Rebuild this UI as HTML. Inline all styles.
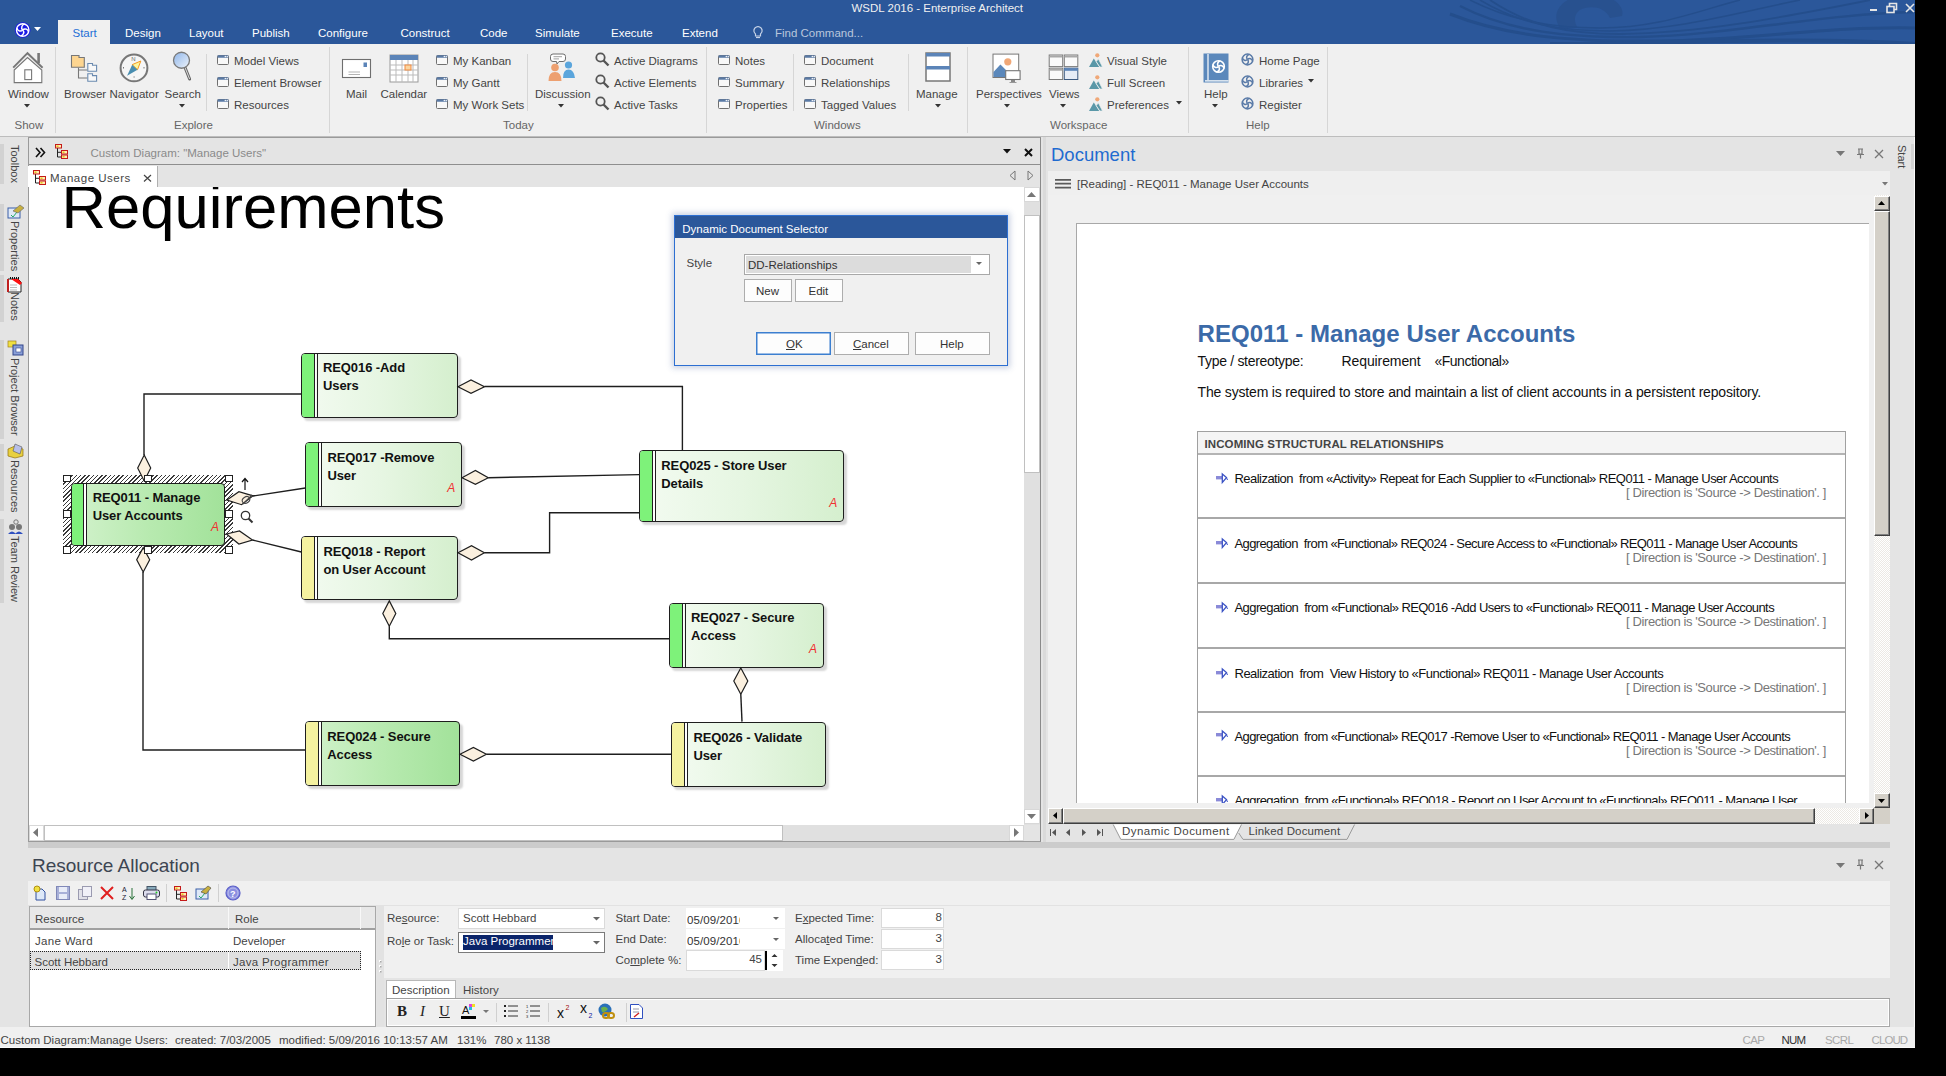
<!DOCTYPE html>
<html><head><meta charset="utf-8"><title>EA</title>
<style>
html,body{margin:0;padding:0;background:#000;width:1946px;height:1076px;overflow:hidden}
.app{position:absolute;left:0;top:0;width:1915px;height:1048px;background:#f0f0f0;overflow:hidden;font-family:"Liberation Sans",sans-serif}
.a{position:absolute;box-sizing:border-box}
.t{line-height:1;white-space:pre}
svg.a{overflow:visible}
</style></head><body><div class="app">
<div class="a " style="left:0px;top:0px;width:1915px;height:44px;background:#2b579a"></div>
<svg class="a" style="left:1400px;top:0px;" width="515" height="44" viewBox="0 0 515 44"><g fill="#28518f"><path d="M160,28 C150,14 160,-4 190,-6 C215,-6 225,8 222,16 L210,18 C205,8 195,6 185,8 C175,10 172,20 178,28 Z"/></g><g fill="none" stroke="#244e8c"><path d="M70,0 C110,20 150,28 200,28 C260,28 300,10 340,0" stroke-width="1.4"/><path d="M80,0 C120,24 160,31 210,31 C280,30 340,12 400,0" stroke-width="1.6"/><path d="M90,0 C130,27 170,34 220,34 C300,33 380,18 470,0" stroke-width="1.8"/><path d="M60,6 C110,32 170,38 240,37 C330,35 420,14 515,12" stroke-width="2.4"/><path d="M50,14 C110,38 180,42 260,41 C350,40 430,26 515,28" stroke-width="3"/><path d="M150,44 C250,44 400,36 515,44" stroke-width="4"/></g></svg>
<div class="a " style="left:1870px;top:9px;width:7px;height:2px;background:#e6e6e6"></div>
<svg class="a" style="left:1886px;top:2px;" width="12" height="12" viewBox="0 0 12 12"><g fill="none" stroke="#e6e6e6" stroke-width="1.6"><rect x="1" y="4.5" width="7" height="6"/><path d="M3.5,4.5 V1.5 H10.5 V7.5 H8"/></g></svg>
<svg class="a" style="left:1905px;top:3px;" width="10" height="10" viewBox="0 0 10 10"><g stroke="#e6e6e6" stroke-width="1.6"><path d="M1,1 L9,9 M9,1 L1,9"/></g></svg>
<div class="a t" style="left:851.50px;top:2.97px;font-size:11.5px;color:#f0f0f0;font-weight:normal;">WSDL 2016 - Enterprise Architect</div>
<svg class="a" style="left:14px;top:21px;" width="18" height="18" viewBox="0 0 18 18"><circle cx="8.7" cy="9" r="7.8" fill="#1a1ae6"/><g fill="none" stroke="#fff" stroke-width="1.4"><circle cx="8.7" cy="9" r="6.2"/><path d="M8.7,9 A3.41,3.41 0 0 1 14.53,11.12"/><path d="M8.7,9 A3.41,3.41 0 0 1 6.58,14.83"/><path d="M8.7,9 A3.41,3.41 0 0 1 2.87,6.88"/><path d="M8.7,9 A3.41,3.41 0 0 1 10.82,3.17"/></g></svg>
<svg class="a" style="left:34px;top:27px;" width="8" height="5" viewBox="0 0 8 5"><path d="M0,0 H7 L3.5,4 Z" fill="#fff"/></svg>
<div class="a " style="left:58px;top:20px;width:52px;height:24px;background:#f0f0f0"></div>
<div class="a t" style="left:72.50px;top:27.97px;font-size:11.5px;color:#1f6fd6;font-weight:normal;">Start</div>
<div class="a t" style="left:125.00px;top:27.97px;font-size:11.5px;color:#ffffff;font-weight:normal;">Design</div>
<div class="a t" style="left:189.00px;top:27.97px;font-size:11.5px;color:#ffffff;font-weight:normal;">Layout</div>
<div class="a t" style="left:252.00px;top:27.97px;font-size:11.5px;color:#ffffff;font-weight:normal;">Publish</div>
<div class="a t" style="left:318.00px;top:27.97px;font-size:11.5px;color:#ffffff;font-weight:normal;">Configure</div>
<div class="a t" style="left:400.50px;top:27.97px;font-size:11.5px;color:#ffffff;font-weight:normal;">Construct</div>
<div class="a t" style="left:480.00px;top:27.97px;font-size:11.5px;color:#ffffff;font-weight:normal;">Code</div>
<div class="a t" style="left:535.00px;top:27.97px;font-size:11.5px;color:#ffffff;font-weight:normal;">Simulate</div>
<div class="a t" style="left:611.00px;top:27.97px;font-size:11.5px;color:#ffffff;font-weight:normal;">Execute</div>
<div class="a t" style="left:682.00px;top:27.97px;font-size:11.5px;color:#ffffff;font-weight:normal;">Extend</div>
<svg class="a" style="left:752px;top:25px;" width="12" height="14" viewBox="0 0 12 14"><g fill="none" stroke="#c8d4e8" stroke-width="1.2"><path d="M3.5,9 C1,7 1,2.5 6,1.5 C11,2.5 11,7 8.5,9 V11 H3.5 Z"/><path d="M4,12.5 H8"/></g></svg>
<div class="a t" style="left:775.00px;top:27.97px;font-size:11.5px;color:#b9c6dc;font-weight:normal;">Find Command...</div>
<div class="a " style="left:0px;top:44px;width:1915px;height:92px;background:#f0f0f0"></div>
<div class="a " style="left:0px;top:136px;width:1915px;height:1px;background:#bdbdbd"></div>
<div class="a " style="left:55px;top:47px;width:1px;height:86px;background:#d6d6d6"></div>
<div class="a " style="left:329px;top:47px;width:1px;height:86px;background:#d6d6d6"></div>
<div class="a " style="left:706px;top:47px;width:1px;height:86px;background:#d6d6d6"></div>
<div class="a " style="left:967px;top:47px;width:1px;height:86px;background:#d6d6d6"></div>
<div class="a " style="left:1188px;top:47px;width:1px;height:86px;background:#d6d6d6"></div>
<div class="a " style="left:1327px;top:47px;width:1px;height:86px;background:#d6d6d6"></div>
<div class="a " style="left:206px;top:54px;width:1px;height:57px;background:#d6d6d6"></div>
<div class="a " style="left:527px;top:54px;width:1px;height:57px;background:#d6d6d6"></div>
<div class="a " style="left:793px;top:54px;width:1px;height:57px;background:#d6d6d6"></div>
<div class="a " style="left:908px;top:54px;width:1px;height:57px;background:#d6d6d6"></div>
<div class="a t" style="left:14.50px;top:119.97px;font-size:11.5px;color:#666;font-weight:normal;">Show</div>
<div class="a t" style="left:174.00px;top:119.97px;font-size:11.5px;color:#666;font-weight:normal;">Explore</div>
<div class="a t" style="left:503.00px;top:119.97px;font-size:11.5px;color:#666;font-weight:normal;">Today</div>
<div class="a t" style="left:814.00px;top:119.97px;font-size:11.5px;color:#666;font-weight:normal;">Windows</div>
<div class="a t" style="left:1050.00px;top:119.97px;font-size:11.5px;color:#666;font-weight:normal;">Workspace</div>
<div class="a t" style="left:1246.00px;top:119.97px;font-size:11.5px;color:#666;font-weight:normal;">Help</div>
<div class="a t" style="left:8.00px;top:88.77px;font-size:11.5px;color:#444;font-weight:normal;">Window</div>
<div class="a t" style="left:64.00px;top:88.77px;font-size:11.5px;color:#444;font-weight:normal;">Browser</div>
<div class="a t" style="left:109.50px;top:88.77px;font-size:11.5px;color:#444;font-weight:normal;">Navigator</div>
<div class="a t" style="left:164.50px;top:88.77px;font-size:11.5px;color:#444;font-weight:normal;">Search</div>
<div class="a t" style="left:346.00px;top:88.77px;font-size:11.5px;color:#444;font-weight:normal;">Mail</div>
<div class="a t" style="left:380.50px;top:88.77px;font-size:11.5px;color:#444;font-weight:normal;">Calendar</div>
<div class="a t" style="left:535.00px;top:88.77px;font-size:11.5px;color:#444;font-weight:normal;">Discussion</div>
<div class="a t" style="left:916.00px;top:88.77px;font-size:11.5px;color:#444;font-weight:normal;">Manage</div>
<div class="a t" style="left:976.00px;top:88.77px;font-size:11.5px;color:#444;font-weight:normal;">Perspectives</div>
<div class="a t" style="left:1049.00px;top:88.77px;font-size:11.5px;color:#444;font-weight:normal;">Views</div>
<div class="a t" style="left:1204.00px;top:88.77px;font-size:11.5px;color:#444;font-weight:normal;">Help</div>
<svg class="a" style="left:24px;top:104px;" width="7" height="4" viewBox="0 0 7 4"><path d="M0,0 H6 L3,3.5 Z" fill="#333"/></svg>
<svg class="a" style="left:179px;top:104px;" width="7" height="4" viewBox="0 0 7 4"><path d="M0,0 H6 L3,3.5 Z" fill="#333"/></svg>
<svg class="a" style="left:558px;top:104px;" width="7" height="4" viewBox="0 0 7 4"><path d="M0,0 H6 L3,3.5 Z" fill="#333"/></svg>
<svg class="a" style="left:935px;top:104px;" width="7" height="4" viewBox="0 0 7 4"><path d="M0,0 H6 L3,3.5 Z" fill="#333"/></svg>
<svg class="a" style="left:1004px;top:104px;" width="7" height="4" viewBox="0 0 7 4"><path d="M0,0 H6 L3,3.5 Z" fill="#333"/></svg>
<svg class="a" style="left:1060px;top:104px;" width="7" height="4" viewBox="0 0 7 4"><path d="M0,0 H6 L3,3.5 Z" fill="#333"/></svg>
<svg class="a" style="left:1212px;top:104px;" width="7" height="4" viewBox="0 0 7 4"><path d="M0,0 H6 L3,3.5 Z" fill="#333"/></svg>
<svg class="a" style="left:217px;top:55px;" width="12" height="10" viewBox="0 0 12 10"><rect x="0.5" y="0.5" width="11" height="9" rx="1" fill="#f8f8f8" stroke="#707070"/><rect x="0.5" y="0.3" width="11" height="2.4" rx="0.8" fill="#5a7aa5"/><circle cx="8.3" cy="1.5" r="0.7" fill="#fff"/><circle cx="10.2" cy="1.5" r="0.7" fill="#fff"/></svg>
<div class="a t" style="left:234.00px;top:55.67px;font-size:11.5px;color:#444;font-weight:normal;">Model Views</div>
<svg class="a" style="left:217px;top:77px;" width="12" height="10" viewBox="0 0 12 10"><rect x="0.5" y="0.5" width="11" height="9" rx="1" fill="#f8f8f8" stroke="#707070"/><rect x="0.5" y="0.3" width="11" height="2.4" rx="0.8" fill="#5a7aa5"/><circle cx="8.3" cy="1.5" r="0.7" fill="#fff"/><circle cx="10.2" cy="1.5" r="0.7" fill="#fff"/></svg>
<div class="a t" style="left:234.00px;top:77.67px;font-size:11.5px;color:#444;font-weight:normal;">Element Browser</div>
<svg class="a" style="left:217px;top:99px;" width="12" height="10" viewBox="0 0 12 10"><rect x="0.5" y="0.5" width="11" height="9" rx="1" fill="#f8f8f8" stroke="#707070"/><rect x="0.5" y="0.3" width="11" height="2.4" rx="0.8" fill="#5a7aa5"/><circle cx="8.3" cy="1.5" r="0.7" fill="#fff"/><circle cx="10.2" cy="1.5" r="0.7" fill="#fff"/></svg>
<div class="a t" style="left:234.00px;top:99.67px;font-size:11.5px;color:#444;font-weight:normal;">Resources</div>
<svg class="a" style="left:436px;top:55px;" width="12" height="10" viewBox="0 0 12 10"><rect x="0.5" y="0.5" width="11" height="9" rx="1" fill="#f8f8f8" stroke="#707070"/><rect x="0.5" y="0.3" width="11" height="2.4" rx="0.8" fill="#5a7aa5"/><circle cx="8.3" cy="1.5" r="0.7" fill="#fff"/><circle cx="10.2" cy="1.5" r="0.7" fill="#fff"/></svg>
<div class="a t" style="left:453.00px;top:55.67px;font-size:11.5px;color:#444;font-weight:normal;">My Kanban</div>
<svg class="a" style="left:436px;top:77px;" width="12" height="10" viewBox="0 0 12 10"><rect x="0.5" y="0.5" width="11" height="9" rx="1" fill="#f8f8f8" stroke="#707070"/><rect x="0.5" y="0.3" width="11" height="2.4" rx="0.8" fill="#5a7aa5"/><circle cx="8.3" cy="1.5" r="0.7" fill="#fff"/><circle cx="10.2" cy="1.5" r="0.7" fill="#fff"/></svg>
<div class="a t" style="left:453.00px;top:77.67px;font-size:11.5px;color:#444;font-weight:normal;">My Gantt</div>
<svg class="a" style="left:436px;top:99px;" width="12" height="10" viewBox="0 0 12 10"><rect x="0.5" y="0.5" width="11" height="9" rx="1" fill="#f8f8f8" stroke="#707070"/><rect x="0.5" y="0.3" width="11" height="2.4" rx="0.8" fill="#5a7aa5"/><circle cx="8.3" cy="1.5" r="0.7" fill="#fff"/><circle cx="10.2" cy="1.5" r="0.7" fill="#fff"/></svg>
<div class="a t" style="left:453.00px;top:99.67px;font-size:11.5px;color:#444;font-weight:normal;">My Work Sets</div>
<svg class="a" style="left:718px;top:55px;" width="12" height="10" viewBox="0 0 12 10"><rect x="0.5" y="0.5" width="11" height="9" rx="1" fill="#f8f8f8" stroke="#707070"/><rect x="0.5" y="0.3" width="11" height="2.4" rx="0.8" fill="#5a7aa5"/><circle cx="8.3" cy="1.5" r="0.7" fill="#fff"/><circle cx="10.2" cy="1.5" r="0.7" fill="#fff"/></svg>
<div class="a t" style="left:735.00px;top:55.67px;font-size:11.5px;color:#444;font-weight:normal;">Notes</div>
<svg class="a" style="left:718px;top:77px;" width="12" height="10" viewBox="0 0 12 10"><rect x="0.5" y="0.5" width="11" height="9" rx="1" fill="#f8f8f8" stroke="#707070"/><rect x="0.5" y="0.3" width="11" height="2.4" rx="0.8" fill="#5a7aa5"/><circle cx="8.3" cy="1.5" r="0.7" fill="#fff"/><circle cx="10.2" cy="1.5" r="0.7" fill="#fff"/></svg>
<div class="a t" style="left:735.00px;top:77.67px;font-size:11.5px;color:#444;font-weight:normal;">Summary</div>
<svg class="a" style="left:718px;top:99px;" width="12" height="10" viewBox="0 0 12 10"><rect x="0.5" y="0.5" width="11" height="9" rx="1" fill="#f8f8f8" stroke="#707070"/><rect x="0.5" y="0.3" width="11" height="2.4" rx="0.8" fill="#5a7aa5"/><circle cx="8.3" cy="1.5" r="0.7" fill="#fff"/><circle cx="10.2" cy="1.5" r="0.7" fill="#fff"/></svg>
<div class="a t" style="left:735.00px;top:99.67px;font-size:11.5px;color:#444;font-weight:normal;">Properties</div>
<svg class="a" style="left:804px;top:55px;" width="12" height="10" viewBox="0 0 12 10"><rect x="0.5" y="0.5" width="11" height="9" rx="1" fill="#f8f8f8" stroke="#707070"/><rect x="0.5" y="0.3" width="11" height="2.4" rx="0.8" fill="#5a7aa5"/><circle cx="8.3" cy="1.5" r="0.7" fill="#fff"/><circle cx="10.2" cy="1.5" r="0.7" fill="#fff"/></svg>
<div class="a t" style="left:821.00px;top:55.67px;font-size:11.5px;color:#444;font-weight:normal;">Document</div>
<svg class="a" style="left:804px;top:77px;" width="12" height="10" viewBox="0 0 12 10"><rect x="0.5" y="0.5" width="11" height="9" rx="1" fill="#f8f8f8" stroke="#707070"/><rect x="0.5" y="0.3" width="11" height="2.4" rx="0.8" fill="#5a7aa5"/><circle cx="8.3" cy="1.5" r="0.7" fill="#fff"/><circle cx="10.2" cy="1.5" r="0.7" fill="#fff"/></svg>
<div class="a t" style="left:821.00px;top:77.67px;font-size:11.5px;color:#444;font-weight:normal;">Relationships</div>
<svg class="a" style="left:804px;top:99px;" width="12" height="10" viewBox="0 0 12 10"><rect x="0.5" y="0.5" width="11" height="9" rx="1" fill="#f8f8f8" stroke="#707070"/><rect x="0.5" y="0.3" width="11" height="2.4" rx="0.8" fill="#5a7aa5"/><circle cx="8.3" cy="1.5" r="0.7" fill="#fff"/><circle cx="10.2" cy="1.5" r="0.7" fill="#fff"/></svg>
<div class="a t" style="left:821.00px;top:99.67px;font-size:11.5px;color:#444;font-weight:normal;">Tagged Values</div>
<svg class="a" style="left:595px;top:52px;" width="15" height="15" viewBox="0 0 15 15"><g fill="none" stroke="#555" stroke-width="1.8"><circle cx="5.5" cy="5.5" r="4.2"/><path d="M8.5,8.5 L13.5,13.5" stroke-width="2.4"/></g></svg>
<div class="a t" style="left:614.00px;top:55.67px;font-size:11.5px;color:#444;font-weight:normal;">Active Diagrams</div>
<svg class="a" style="left:595px;top:74px;" width="15" height="15" viewBox="0 0 15 15"><g fill="none" stroke="#555" stroke-width="1.8"><circle cx="5.5" cy="5.5" r="4.2"/><path d="M8.5,8.5 L13.5,13.5" stroke-width="2.4"/></g></svg>
<div class="a t" style="left:614.00px;top:77.67px;font-size:11.5px;color:#444;font-weight:normal;">Active Elements</div>
<svg class="a" style="left:595px;top:96px;" width="15" height="15" viewBox="0 0 15 15"><g fill="none" stroke="#555" stroke-width="1.8"><circle cx="5.5" cy="5.5" r="4.2"/><path d="M8.5,8.5 L13.5,13.5" stroke-width="2.4"/></g></svg>
<div class="a t" style="left:614.00px;top:99.67px;font-size:11.5px;color:#444;font-weight:normal;">Active Tasks</div>
<svg class="a" style="left:1089px;top:53px;" width="14" height="14" viewBox="0 0 14 14"><circle cx="8.3" cy="2.3" r="2.1" fill="#f0a878"/><path d="M0,14 L4.8,5.5 L10.3,14 Z" fill="#5a98a8"/><path d="M7.2,8.6 L9.4,5.8 L13.6,14 H10.8 Z" fill="#5a98a8" stroke="#f0f0f0" stroke-width="0.8"/></svg>
<div class="a t" style="left:1107.00px;top:55.67px;font-size:11.5px;color:#444;font-weight:normal;">Visual Style</div>
<svg class="a" style="left:1089px;top:75px;" width="14" height="14" viewBox="0 0 14 14"><circle cx="8.3" cy="2.3" r="2.1" fill="#f0a878"/><path d="M0,14 L4.8,5.5 L10.3,14 Z" fill="#5a98a8"/><path d="M7.2,8.6 L9.4,5.8 L13.6,14 H10.8 Z" fill="#5a98a8" stroke="#f0f0f0" stroke-width="0.8"/></svg>
<div class="a t" style="left:1107.00px;top:77.67px;font-size:11.5px;color:#444;font-weight:normal;">Full Screen</div>
<svg class="a" style="left:1089px;top:97px;" width="14" height="14" viewBox="0 0 14 14"><circle cx="8.3" cy="2.3" r="2.1" fill="#f0a878"/><path d="M0,14 L4.8,5.5 L10.3,14 Z" fill="#5a98a8"/><path d="M7.2,8.6 L9.4,5.8 L13.6,14 H10.8 Z" fill="#5a98a8" stroke="#f0f0f0" stroke-width="0.8"/></svg>
<div class="a t" style="left:1107.00px;top:99.67px;font-size:11.5px;color:#444;font-weight:normal;">Preferences</div>
<svg class="a" style="left:1176px;top:101px;" width="7" height="4" viewBox="0 0 7 4"><path d="M0,0 H6 L3,3.5 Z" fill="#333"/></svg>
<svg class="a" style="left:1241px;top:53px;" width="13" height="13" viewBox="0 0 13 13"><g fill="none" stroke="#5a7ba8" stroke-width="1.5"><circle cx="6.5" cy="6.5" r="5.4"/><path d="M6.5,6.5 A2.97,2.97 0 0 1 11.57,8.35"/><path d="M6.5,6.5 A2.97,2.97 0 0 1 4.65,11.57"/><path d="M6.5,6.5 A2.97,2.97 0 0 1 1.43,4.65"/><path d="M6.5,6.5 A2.97,2.97 0 0 1 8.35,1.43"/></g></svg>
<div class="a t" style="left:1259.00px;top:55.67px;font-size:11.5px;color:#444;font-weight:normal;">Home Page</div>
<svg class="a" style="left:1241px;top:75px;" width="13" height="13" viewBox="0 0 13 13"><g fill="none" stroke="#5a7ba8" stroke-width="1.5"><circle cx="6.5" cy="6.5" r="5.4"/><path d="M6.5,6.5 A2.97,2.97 0 0 1 11.57,8.35"/><path d="M6.5,6.5 A2.97,2.97 0 0 1 4.65,11.57"/><path d="M6.5,6.5 A2.97,2.97 0 0 1 1.43,4.65"/><path d="M6.5,6.5 A2.97,2.97 0 0 1 8.35,1.43"/></g></svg>
<div class="a t" style="left:1259.00px;top:77.67px;font-size:11.5px;color:#444;font-weight:normal;">Libraries</div>
<svg class="a" style="left:1241px;top:97px;" width="13" height="13" viewBox="0 0 13 13"><g fill="none" stroke="#5a7ba8" stroke-width="1.5"><circle cx="6.5" cy="6.5" r="5.4"/><path d="M6.5,6.5 A2.97,2.97 0 0 1 11.57,8.35"/><path d="M6.5,6.5 A2.97,2.97 0 0 1 4.65,11.57"/><path d="M6.5,6.5 A2.97,2.97 0 0 1 1.43,4.65"/><path d="M6.5,6.5 A2.97,2.97 0 0 1 8.35,1.43"/></g></svg>
<div class="a t" style="left:1259.00px;top:99.67px;font-size:11.5px;color:#444;font-weight:normal;">Register</div>
<svg class="a" style="left:1308px;top:79px;" width="7" height="4" viewBox="0 0 7 4"><path d="M0,0 H6 L3,3.5 Z" fill="#333"/></svg>
<svg class="a" style="left:12px;top:51px;" width="32" height="33" viewBox="0 0 32 33"><path d="M2.2,19 L15.5,6.6 L29.8,19 V31.6 H2.2 Z" fill="#fff" stroke="#777" stroke-width="1.1"/><rect x="12.8" y="18.8" width="6.8" height="9.8" fill="none" stroke="#777" stroke-width="1.1"/><rect x="25.3" y="2" width="2.6" height="10" fill="#777"/><path d="M1.2,16.7 L15.5,2.2 L30.6,16.7" fill="none" stroke="#777" stroke-width="1.9"/></svg>
<svg class="a" style="left:70px;top:54px;" width="28" height="29" viewBox="0 0 28 29"><path d="M8.5,13.7 V24 H17.3 M8.5,16 H17.3" fill="none" stroke="#777" stroke-width="1.1"/><path d="M1.5,1.5 H9 V3.5 H14.3 V13.3 H1.5 Z" fill="#fdd590" stroke="#777" stroke-width="1.1"/><g fill="#f8f8f8" stroke="#6a8ab0" stroke-width="1.1"><path d="M17.8,9.5 H22.5 V11.3 H26.6 V17.3 H17.8 Z"/><path d="M17.8,19.8 H22.5 V21.6 H26.6 V27.3 H17.8 Z"/></g></svg>
<svg class="a" style="left:118px;top:52px;" width="32" height="32" viewBox="0 0 32 32"><circle cx="16" cy="15.9" r="13.4" fill="#f6f6f6" stroke="#777" stroke-width="2"/><path d="M22.8,9 L14.2,12.65 L19.5,17.7 Z" fill="#fbf6a0" stroke="#f59a20" stroke-width="1"/><path d="M14.2,12.65 L19.5,17.7 L9.1,23.75 Z" fill="#4a8eb0"/><text x="13.2" y="9.2" font-size="6" fill="#666" font-family="Liberation Sans">N</text><g fill="#777"><rect x="5" y="15" width="1" height="1.5"/><rect x="25.5" y="15" width="1" height="1.5"/><rect x="15.5" y="24.5" width="1.2" height="1"/></g></svg>
<svg class="a" style="left:171px;top:50px;" width="22" height="32" viewBox="0 0 22 32"><defs><linearGradient id="mg" x1="0" y1="0" x2="1" y2="1"><stop offset="0" stop-color="#8fb6ea"/><stop offset="1" stop-color="#eef3fa"/></linearGradient></defs><path d="M14,17.5 L18.6,29" stroke="#666" stroke-width="3" stroke-linecap="round"/><path d="M14,17.5 L18.6,29" stroke="#ddd" stroke-width="1"/><circle cx="10.5" cy="10.25" r="8" fill="url(#mg)" stroke="#7a7a7a" stroke-width="1.3"/></svg>
<svg class="a" style="left:341px;top:58px;" width="31" height="21" viewBox="0 0 31 21"><rect x="1.5" y="1.5" width="28" height="18" fill="#fff" stroke="#6e6e6e" stroke-width="1.1"/><rect x="22.5" y="4.5" width="3.5" height="4.5" fill="#5b84b8"/><path d="M7.5,14 H19 M7.5,16.5 H19" stroke="#aaa" stroke-width="0.9"/></svg>
<svg class="a" style="left:389px;top:54px;" width="30" height="29" viewBox="0 0 30 29"><rect x="1" y="1" width="28" height="27" fill="#fff" stroke="#999"/><rect x="1" y="1" width="28" height="5" fill="#5b84b8"/><g stroke="#bbb"><path d="M1,11 H29 M1,16 H29 M1,21 H29 M7,6 V28 M13,6 V28 M19,6 V28 M24,6 V28"/></g><rect x="16" y="11" width="6" height="5" fill="#fbd5a0" stroke="#f08a40"/></svg>
<svg class="a" style="left:547px;top:53px;" width="30" height="30" viewBox="0 0 30 30"><path d="M6,1 H16 Q18.5,1 18.5,3.5 V6 Q18.5,8.5 16,8.5 H12 L10,11 L9.5,8.5 H6 Q3.5,8.5 3.5,6 V3.5 Q3.5,1 6,1 Z" fill="#fff" stroke="#6e6e6e" stroke-width="1"/><path d="M6.5,3.7 H15 M6.5,5.9 H12" stroke="#888" stroke-width="0.8"/><circle cx="21.5" cy="12" r="3.6" fill="#5aa5dc"/><path d="M16,25 Q16,16.5 21.5,16.5 Q27,16.5 28,25 Z" fill="#5aa5dc"/><circle cx="8" cy="14.5" r="3.8" fill="#eda070"/><path d="M1.5,28 Q1.5,19 8,19 Q14.5,19 14.5,28 Z" fill="#eda070"/></svg>
<svg class="a" style="left:925px;top:52px;" width="26" height="31" viewBox="0 0 26 31"><rect x="1" y="1" width="24" height="28" fill="#fff" stroke="#777" stroke-width="1.5"/><rect x="1" y="1" width="24" height="3.5" fill="#5b84b8"/><rect x="1" y="14" width="24" height="3.5" fill="#5b84b8"/></svg>
<svg class="a" style="left:992px;top:53px;" width="31" height="31" viewBox="0 0 31 31"><rect x="1" y="1.1" width="25.7" height="23.4" fill="#fff" stroke="#777" stroke-width="1"/><path d="M1.5,24 V19 L8.4,11.4 L16,19 V24 Z" fill="#5b88bb"/><circle cx="15.8" cy="8.8" r="3.6" fill="#f0a878"/><rect x="13.7" y="17.7" width="14.4" height="8.8" fill="#fff" stroke="#777" stroke-width="1.1"/><rect x="19" y="27" width="4" height="2.5" fill="#888"/><rect x="17.5" y="29" width="7" height="1" fill="#999"/></svg>
<svg class="a" style="left:1048px;top:54px;" width="31" height="27" viewBox="0 0 31 27"><g fill="#fafafa" stroke="#7a7a7a" stroke-width="1"><rect x="1.2" y="1" width="13.5" height="11.6"/><rect x="16.3" y="1" width="13.5" height="11.6"/><rect x="1.2" y="14.2" width="13.5" height="11.3"/></g><g fill="#a8a8a8"><rect x="1.7" y="1.5" width="12.5" height="2"/><rect x="16.8" y="1.5" width="12.5" height="2"/><rect x="1.7" y="14.7" width="12.5" height="2"/></g><rect x="16.3" y="14.2" width="13.5" height="11.3" fill="#e6ecf6" stroke="#3c5a80" stroke-width="1"/><rect x="16.3" y="14.2" width="13.5" height="2.6" fill="#5b84b8"/></svg>
<svg class="a" style="left:1203px;top:53px;" width="26" height="30" viewBox="0 0 26 30"><rect x="0.5" y="0.5" width="25" height="29" fill="#5b88bb"/><path d="M5,1 V27 M2,27.8 H25.5" fill="none" stroke="#fff" stroke-width="1.2"/><g fill="none" stroke="#fff" stroke-width="1.6"><circle cx="15.5" cy="13.5" r="5.8"/><path d="M15.5,13.5 A3.19,3.19 0 0 1 20.95,15.48"/><path d="M15.5,13.5 A3.19,3.19 0 0 1 13.52,18.95"/><path d="M15.5,13.5 A3.19,3.19 0 0 1 10.05,11.52"/><path d="M15.5,13.5 A3.19,3.19 0 0 1 17.48,8.05"/></g></svg>
<div class="a " style="left:0px;top:137px;width:1915px;height:890px;background:#e4e4e4"></div>
<div class="a " style="left:0px;top:144px;width:4px;height:40px;background:#d2d2d2"></div>
<div class="a " style="left:0px;top:204px;width:4px;height:67px;background:#d2d2d2"></div>
<div class="a " style="left:0px;top:275px;width:4px;height:47px;background:#d2d2d2"></div>
<div class="a " style="left:0px;top:340px;width:4px;height:99px;background:#d2d2d2"></div>
<div class="a " style="left:0px;top:444px;width:4px;height:67px;background:#d2d2d2"></div>
<div class="a " style="left:0px;top:519px;width:4px;height:84px;background:#d2d2d2"></div>
<div class="a t" style="left:14.3px;top:145px;font-size:11px;color:#444;transform-origin:0 0;transform:rotate(90deg) translate(0,-5.5px)">Toolbox</div>
<div class="a t" style="left:14.3px;top:221px;font-size:11px;color:#444;transform-origin:0 0;transform:rotate(90deg) translate(0,-5.5px)">Properties</div>
<div class="a t" style="left:14.3px;top:292px;font-size:11px;color:#444;transform-origin:0 0;transform:rotate(90deg) translate(0,-5.5px)">Notes</div>
<div class="a t" style="left:14.3px;top:357.5px;font-size:11px;color:#444;transform-origin:0 0;transform:rotate(90deg) translate(0,-5.5px)">Project Browser</div>
<div class="a t" style="left:14.3px;top:460px;font-size:11px;color:#444;transform-origin:0 0;transform:rotate(90deg) translate(0,-5.5px)">Resources</div>
<div class="a t" style="left:14.3px;top:536px;font-size:11px;color:#444;transform-origin:0 0;transform:rotate(90deg) translate(0,-5.5px)">Team Review</div>
<svg class="a" style="left:7px;top:204px;" width="18" height="15" viewBox="0 0 18 15"><rect x="1" y="4" width="12" height="10" fill="#dfe9f7" stroke="#3b5fa8"/><path d="M4,11 L6,13 L10,8" stroke="#2a6" fill="none"/><path d="M6,7 L13,1 L17,4 L11,9 Z" fill="#c8b040" stroke="#666" stroke-width="0.6"/></svg>
<svg class="a" style="left:6px;top:275px;" width="17" height="18" viewBox="0 0 17 18"><path d="M2,4 H12 L15,7 V17 H2 Z" fill="#fff" stroke="#222" stroke-width="1"/><path d="M2,4 V17" stroke="#c02020" stroke-width="2"/><path d="M5,4 H12 L16,8 L14,10 Z" fill="#ff1010"/><path d="M4,10 H11 M4,12.5 H11 M4,15 H11" stroke="#aaa" stroke-width="0.8"/><g fill="#111"><rect x="4" y="2" width="1" height="2"/><rect x="6" y="2" width="1" height="2"/><rect x="8" y="2" width="1" height="2"/><rect x="10" y="2" width="1" height="2"/><rect x="12" y="2" width="1" height="2"/></g></svg>
<svg class="a" style="left:7px;top:340px;" width="17" height="16" viewBox="0 0 17 16"><rect x="1" y="1" width="8" height="6" fill="#f0e040" stroke="#a08020" stroke-width="0.7"/><rect x="6" y="5" width="10" height="10" fill="#8aa0d8" stroke="#33458a"/><rect x="9" y="8" width="5" height="4" fill="#fff" stroke="#33458a" stroke-width="0.6"/></svg>
<svg class="a" style="left:7px;top:443px;" width="17" height="16" viewBox="0 0 17 16"><path d="M1,6 L8,3 L16,6 L16,13 L8,15 L1,13 Z" fill="#e8d040" stroke="#907010" stroke-width="0.7"/><path d="M8,1 L15,4 L13,11 L6,8 Z" fill="#b8c0e8" stroke="#555" stroke-width="0.6"/></svg>
<svg class="a" style="left:7px;top:519px;" width="17" height="16" viewBox="0 0 17 16"><circle cx="5" cy="8" r="3" fill="#777"/><circle cx="12" cy="8" r="3" fill="#777"/><path d="M1,15 Q5,10 9,15 Z M8,15 Q12,10 16,15 Z" fill="#3050c0"/><circle cx="9" cy="3" r="2.2" fill="none" stroke="#777"/></svg>
<div class="a " style="left:1890px;top:137px;width:25px;height:890px;background:#e4e4e4"></div>
<div class="a " style="left:1911px;top:144px;width:3px;height:25px;background:#d2d2d2"></div>
<div class="a t" style="left:1900.5px;top:145px;font-size:11px;color:#444;transform-origin:0 0;transform:rotate(90deg) translate(0,-5.5px)">Start</div>
<div class="a " style="left:1914px;top:137px;width:1px;height:911px;background:#fafafa"></div>
<div class="a " style="left:28px;top:137px;width:1013px;height:705px;background:#e4e4e4;border:1px solid #9a9a9a;border-right:1px solid #8a8a8a"></div>
<div class="a " style="left:29px;top:164px;width:1011px;height:1px;background:#8e8e8e"></div>
<svg class="a" style="left:35px;top:147px;" width="11" height="11" viewBox="0 0 11 11"><path d="M1,1 L5,5.5 L1,10 M5.5,1 L9.5,5.5 L5.5,10" fill="none" stroke="#111" stroke-width="1.6"/></svg>
<svg class="a" style="left:55px;top:144px;" width="14" height="15" viewBox="0 0 14 15"><path d="M2.5,4 V13 H7 M2.5,8.3 H7" fill="none" stroke="#222" stroke-width="1"/><g fill="#fff0b0" stroke="#c41a1a" stroke-width="1"><rect x="0.5" y="0.5" width="6" height="3.5"/><rect x="6.5" y="6.5" width="6" height="3.5"/><rect x="6.5" y="11" width="6" height="3.5"/></g><g fill="#e8c020"><rect x="1.5" y="1.5" width="2" height="1.5"/><rect x="7.5" y="7.5" width="2" height="1.5"/><rect x="7.5" y="12" width="2" height="1.5"/></g></svg>
<div class="a t" style="left:90.50px;top:147.97px;font-size:11.5px;color:#8a8a8a;font-weight:normal;">Custom Diagram: &quot;Manage Users&quot;</div>
<svg class="a" style="left:1003px;top:149px;" width="9" height="5" viewBox="0 0 9 5"><path d="M0,0 H8 L4,4.5 Z" fill="#111"/></svg>
<svg class="a" style="left:1024px;top:148px;" width="9" height="9" viewBox="0 0 9 9"><path d="M1,1 L8,8 M8,1 L1,8" stroke="#111" stroke-width="2"/></svg>
<div class="a " style="left:28px;top:166px;width:130px;height:21px;background:#fff;border-right:1px solid #b0b0b0"></div>
<svg class="a" style="left:33px;top:170px;" width="14" height="15" viewBox="0 0 14 15"><path d="M2.5,4 V13 H7 M2.5,8.3 H7" fill="none" stroke="#222" stroke-width="1"/><g fill="#fff0b0" stroke="#c41a1a" stroke-width="1"><rect x="0.5" y="0.5" width="6" height="3.5"/><rect x="6.5" y="6.5" width="6" height="3.5"/><rect x="6.5" y="11" width="6" height="3.5"/></g><g fill="#e8c020"><rect x="1.5" y="1.5" width="2" height="1.5"/><rect x="7.5" y="7.5" width="2" height="1.5"/><rect x="7.5" y="12" width="2" height="1.5"/></g></svg>
<div class="a t" style="left:50.00px;top:172.97px;font-size:11.5px;color:#444;font-weight:normal;letter-spacing:0.5px;">Manage Users</div>
<svg class="a" style="left:143px;top:174px;" width="9" height="8" viewBox="0 0 9 8"><path d="M1,1 L8,7.5 M8,1 L1,7.5" stroke="#444" stroke-width="1.2"/></svg>
<svg class="a" style="left:1009px;top:170px;" width="7" height="11" viewBox="0 0 7 11"><path d="M6,1 L1,5.5 L6,10 Z" fill="none" stroke="#777"/></svg>
<svg class="a" style="left:1027px;top:170px;" width="7" height="11" viewBox="0 0 7 11"><path d="M1,1 L6,5.5 L1,10 Z" fill="none" stroke="#777"/></svg>
<div class="a " style="left:29px;top:187px;width:995px;height:638px;background:#fff"></div>
<div class="a " style="left:1024px;top:187px;width:16px;height:638px;background:#e0e0e0"></div>
<div class="a " style="left:1024px;top:187px;width:16px;height:15px;background:#fff;border:1px solid #d8d8d8"></div>
<svg class="a" style="left:1027px;top:192px;" width="10" height="6" viewBox="0 0 10 6"><path d="M0,5 L4.5,0 L9,5 Z" fill="#777"/></svg>
<div class="a " style="left:1024px;top:215px;width:16px;height:258px;background:#fff;border:1px solid #c0c0c0"></div>
<div class="a " style="left:1024px;top:809px;width:16px;height:15px;background:#fff;border:1px solid #d8d8d8"></div>
<svg class="a" style="left:1027px;top:814px;" width="10" height="6" viewBox="0 0 10 6"><path d="M0,0 L4.5,5 L9,0 Z" fill="#777"/></svg>
<div class="a " style="left:29px;top:825px;width:995px;height:16px;background:#e0e0e0"></div>
<div class="a " style="left:29px;top:825px;width:15px;height:16px;background:#fff;border:1px solid #d8d8d8"></div>
<svg class="a" style="left:33px;top:828px;" width="6" height="10" viewBox="0 0 6 10"><path d="M5,0 L0,4.5 L5,9 Z" fill="#777"/></svg>
<div class="a " style="left:44px;top:825px;width:739px;height:16px;background:#fff;border:1px solid #c0c0c0"></div>
<div class="a " style="left:1009px;top:825px;width:15px;height:16px;background:#fff;border:1px solid #d8d8d8"></div>
<svg class="a" style="left:1014px;top:828px;" width="6" height="10" viewBox="0 0 6 10"><path d="M0,0 L5,4.5 L0,9 Z" fill="#777"/></svg>
<div class="a " style="left:1024px;top:825px;width:16px;height:16px;background:#e4e4e4"></div>
<div class="a " style="left:1043px;top:137px;width:3px;height:705px;background:#dadada"></div>
<div class="a " style="left:1047px;top:137px;width:843px;height:34px;background:#e4e4e4"></div>
<div class="a t" style="left:1051.00px;top:145.74px;font-size:18.5px;color:#1f6bd0;font-weight:normal;">Document</div>
<svg class="a" style="left:1836px;top:151px;" width="10" height="6" viewBox="0 0 10 6"><path d="M0,0 H9 L4.5,5 Z" fill="#777"/></svg>
<svg class="a" style="left:1856px;top:148px;" width="9" height="11" viewBox="0 0 9 11"><path d="M2,1 H7 M3,1 V6 H6 V1 M1,6.5 H8 M4.5,6.5 V10.5" fill="none" stroke="#777" stroke-width="1.2"/></svg>
<svg class="a" style="left:1874px;top:149px;" width="10" height="10" viewBox="0 0 10 10"><path d="M1,1 L9,9 M9,1 L1,9" stroke="#777" stroke-width="1.3"/></svg>
<div class="a " style="left:1048px;top:171px;width:842px;height:24px;background:#efefef"></div>
<svg class="a" style="left:1055px;top:178px;" width="16" height="12" viewBox="0 0 16 12"><path d="M0,1.8 H16 M0,5.7 H16 M0,9.6 H16" stroke="#5a5a5a" stroke-width="1.8"/></svg>
<div class="a t" style="left:1077.00px;top:178.97px;font-size:11.5px;color:#444;font-weight:normal;">[Reading] - REQ011 - Manage User Accounts</div>
<svg class="a" style="left:1882px;top:182px;" width="7" height="5" viewBox="0 0 7 5"><path d="M0,0 H6 L3,3.5 Z" fill="#777"/></svg>
<div class="a " style="left:1048px;top:195px;width:826px;height:613px;background:#f0f0f0"></div>
<div class="a " style="left:1076px;top:223px;width:793px;height:580px;background:#fff;border-top:1px solid #a8a8a8;border-left:1px solid #a8a8a8"></div>
<div class="a " style="left:1874px;top:195px;width:16px;height:613px;background-color:#ece9e4;background-image:linear-gradient(45deg,#fff 25%,transparent 25%,transparent 75%,#fff 75%),linear-gradient(45deg,#fff 25%,transparent 25%,transparent 75%,#fff 75%);background-size:2px 2px;background-position:0 0,1px 1px"></div>
<div class="a " style="left:1874px;top:196px;width:16px;height:15px;background:#d4d0c8;border-top:1px solid #fff;border-left:1px solid #fff;border-right:1px solid #404040;border-bottom:1px solid #404040;box-shadow:inset -1px -1px 0 #808080"></div>
<svg class="a" style="left:1878px;top:201px;" width="8" height="5" viewBox="0 0 8 5"><path d="M0,4 L3.5,0 L7,4 Z" fill="#000"/></svg>
<div class="a " style="left:1874px;top:211px;width:16px;height:325px;background:#d4d0c8;border-top:1px solid #fff;border-left:1px solid #fff;border-right:1px solid #404040;border-bottom:1px solid #404040;box-shadow:inset -1px -1px 0 #808080"></div>
<div class="a " style="left:1874px;top:793px;width:16px;height:15px;background:#d4d0c8;border-top:1px solid #fff;border-left:1px solid #fff;border-right:1px solid #404040;border-bottom:1px solid #404040;box-shadow:inset -1px -1px 0 #808080"></div>
<svg class="a" style="left:1878px;top:799px;" width="8" height="5" viewBox="0 0 8 5"><path d="M0,0 L3.5,4 L7,0 Z" fill="#000"/></svg>
<div class="a " style="left:1048px;top:808px;width:826px;height:16px;background-color:#ece9e4;background-image:linear-gradient(45deg,#fff 25%,transparent 25%,transparent 75%,#fff 75%),linear-gradient(45deg,#fff 25%,transparent 25%,transparent 75%,#fff 75%);background-size:2px 2px;background-position:0 0,1px 1px"></div>
<div class="a " style="left:1048px;top:808px;width:15px;height:16px;background:#d4d0c8;border-top:1px solid #fff;border-left:1px solid #fff;border-right:1px solid #404040;border-bottom:1px solid #404040;box-shadow:inset -1px -1px 0 #808080"></div>
<svg class="a" style="left:1053px;top:812px;" width="5" height="8" viewBox="0 0 5 8"><path d="M4,0 L0,3.5 L4,7 Z" fill="#000"/></svg>
<div class="a " style="left:1063px;top:808px;width:752px;height:16px;background:#d4d0c8;border-top:1px solid #fff;border-left:1px solid #fff;border-right:1px solid #404040;border-bottom:1px solid #404040;box-shadow:inset -1px -1px 0 #808080"></div>
<div class="a " style="left:1859px;top:808px;width:15px;height:16px;background:#d4d0c8;border-top:1px solid #fff;border-left:1px solid #fff;border-right:1px solid #404040;border-bottom:1px solid #404040;box-shadow:inset -1px -1px 0 #808080"></div>
<svg class="a" style="left:1865px;top:812px;" width="5" height="8" viewBox="0 0 5 8"><path d="M0,0 L4,3.5 L0,7 Z" fill="#000"/></svg>
<div class="a " style="left:1874px;top:808px;width:16px;height:16px;background:#d4d0c8"></div>
<div class="a " style="left:1047px;top:824px;width:843px;height:18px;background:#e4e4e4"></div>
<svg class="a" style="left:1050px;top:828px;" width="60" height="10" viewBox="0 0 60 10"><g fill="#555"><rect x="0" y="1" width="1" height="7"/><path d="M6,1 L2,4.5 L6,8 Z"/><path d="M20,1 L16,4.5 L20,8 Z"/><path d="M32,1 L36,4.5 L32,8 Z"/><path d="M47,1 L51,4.5 L47,8 Z"/><rect x="52" y="1" width="1" height="7"/></g></svg>
<svg class="a" style="left:1100px;top:822px;" width="270" height="20" viewBox="0 0 270 20"><path d="M13.2,2.5 L20.8,17.4 H133.9 L141.5,2.5" fill="#fff" stroke="#9a9a9a"/><path d="M138.7,11 L143,17.4 H247 L254.6,2.5" fill="none" stroke="#9a9a9a"/></svg>
<div class="a t" style="left:1122.00px;top:826.47px;font-size:11.5px;color:#444;font-weight:normal;letter-spacing:0.45px;">Dynamic Document</div>
<div class="a t" style="left:1248.50px;top:826.47px;font-size:11.5px;color:#444;font-weight:normal;letter-spacing:0.15px;">Linked Document</div>
<div class="a " style="left:28px;top:842px;width:1862px;height:6px;background:#cccccc"></div>
<div class="a " style="left:28px;top:848px;width:1862px;height:33px;background:#e4e4e4"></div>
<div class="a t" style="left:32.00px;top:855.82px;font-size:19px;color:#3d4552;font-weight:normal;">Resource Allocation</div>
<svg class="a" style="left:1836px;top:863px;" width="10" height="6" viewBox="0 0 10 6"><path d="M0,0 H9 L4.5,5 Z" fill="#777"/></svg>
<svg class="a" style="left:1856px;top:859px;" width="9" height="11" viewBox="0 0 9 11"><path d="M2,1 H7 M3,1 V6 H6 V1 M1,6.5 H8 M4.5,6.5 V10.5" fill="none" stroke="#777" stroke-width="1.2"/></svg>
<svg class="a" style="left:1874px;top:860px;" width="10" height="10" viewBox="0 0 10 10"><path d="M1,1 L9,9 M9,1 L1,9" stroke="#777" stroke-width="1.3"/></svg>
<div class="a " style="left:28px;top:881px;width:1862px;height:24px;background:#f0f0f0"></div>
<div class="a " style="left:28px;top:905px;width:1862px;height:1px;background:#e2e2e2"></div>
<svg class="a" style="left:33px;top:885px;" width="14" height="16" viewBox="0 0 14 16"><path d="M3,4 H9 L12,7 V15 H3 Z" fill="#dde8f8" stroke="#3050a0"/><circle cx="4" cy="4" r="3" fill="#f0e040" stroke="#b09010"/></svg>
<svg class="a" style="left:56px;top:886px;" width="14" height="14" viewBox="0 0 14 14"><rect x="0.5" y="0.5" width="13" height="13" fill="#a8b0d8" stroke="#8088b8"/><rect x="3" y="1" width="8" height="5" fill="#e8ecf8"/><rect x="3" y="8" width="8" height="5" fill="#e8ecf8"/></svg>
<svg class="a" style="left:78px;top:886px;" width="14" height="14" viewBox="0 0 14 14"><rect x="0.5" y="3.5" width="9" height="10" fill="#e0e0e8" stroke="#9a9ab0"/><rect x="4.5" y="0.5" width="9" height="10" fill="#f0f0f8" stroke="#9a9ab0"/></svg>
<svg class="a" style="left:100px;top:886px;" width="14" height="14" viewBox="0 0 14 14"><path d="M1,1 L13,13 M13,1 L1,13" stroke="#e02020" stroke-width="2"/></svg>
<svg class="a" style="left:122px;top:885px;" width="14" height="16" viewBox="0 0 14 16"><text x="0" y="7" font-size="7" font-family="Liberation Sans" fill="#223">A</text><text x="0" y="15" font-size="7" font-family="Liberation Sans" fill="#223">Z</text><path d="M10,3 V14 M7.5,11 L10,14.5 L12.5,11" stroke="#287038" fill="none"/></svg>
<svg class="a" style="left:143px;top:886px;" width="17" height="14" viewBox="0 0 17 14"><rect x="4" y="0.5" width="9" height="4" fill="#8ab" stroke="#456"/><rect x="0.5" y="4" width="16" height="7" rx="2" fill="#dde" stroke="#334"/><rect x="4" y="8" width="9" height="5.5" fill="#fff" stroke="#557"/><circle cx="13.5" cy="6.5" r="1" fill="#2c2"/></svg>
<div class="a " style="left:166px;top:884px;width:1px;height:18px;background:#d0d0d0"></div>
<svg class="a" style="left:174px;top:886px;" width="14" height="15" viewBox="0 0 14 15"><path d="M2.5,4 V13 H7 M2.5,8.3 H7" fill="none" stroke="#222" stroke-width="1"/><g fill="#fff0b0" stroke="#c41a1a" stroke-width="1"><rect x="0.5" y="0.5" width="6" height="3.5"/><rect x="6.5" y="6.5" width="6" height="3.5"/><rect x="6.5" y="11" width="6" height="3.5"/></g><g fill="#e8c020"><rect x="1.5" y="1.5" width="2" height="1.5"/><rect x="7.5" y="7.5" width="2" height="1.5"/><rect x="7.5" y="12" width="2" height="1.5"/></g></svg>
<svg class="a" style="left:195px;top:885px;" width="17" height="15" viewBox="0 0 17 15"><rect x="1" y="4" width="12" height="10" fill="#dfe9f7" stroke="#3b5fa8"/><path d="M4,11 L6,13 L10,8" stroke="#2a6" fill="none"/><path d="M6,7 L13,1 L16,3 L11,9 Z" fill="#c8b040" stroke="#444" stroke-width="0.6"/></svg>
<div class="a " style="left:218px;top:884px;width:1px;height:18px;background:#d0d0d0"></div>
<svg class="a" style="left:225px;top:885px;" width="16" height="16" viewBox="0 0 16 16"><circle cx="8" cy="8" r="7" fill="#8b8fe0" stroke="#5a5ec8" stroke-width="1.2"/><circle cx="8" cy="8" r="5" fill="none" stroke="#c8caf0" stroke-width="0.8"/><text x="5" y="11.5" font-size="9" font-weight="bold" font-family="Liberation Sans" fill="#fff">?</text></svg>
<div class="a " style="left:29px;top:906px;width:347px;height:121px;background:#fff;border:1px solid #a8a8a8"></div>
<div class="a " style="left:30px;top:907px;width:345px;height:22px;background:#e8e8e8"></div>
<div class="a " style="left:30px;top:928px;width:345px;height:2px;background:#a0a0a0"></div>
<div class="a " style="left:228px;top:907px;width:1px;height:22px;background:#f8f8f8"></div>
<div class="a " style="left:360px;top:907px;width:1px;height:22px;background:#f8f8f8"></div>
<div class="a t" style="left:35.00px;top:914.47px;font-size:11.5px;color:#444;font-weight:normal;">Resource</div>
<div class="a t" style="left:235.00px;top:914.47px;font-size:11.5px;color:#444;font-weight:normal;">Role</div>
<div class="a t" style="left:35.00px;top:936.47px;font-size:11.5px;color:#444;font-weight:normal;letter-spacing:0.3px;">Jane Ward</div>
<div class="a t" style="left:233.00px;top:936.47px;font-size:11.5px;color:#444;font-weight:normal;">Developer</div>
<div class="a " style="left:30px;top:951px;width:331px;height:19px;background:#e0e0e0;border:1px dotted #222"></div>
<div class="a " style="left:228px;top:952px;width:1px;height:17px;background:#fff"></div>
<div class="a t" style="left:34.50px;top:956.97px;font-size:11.5px;color:#444;font-weight:normal;">Scott Hebbard</div>
<div class="a t" style="left:233.00px;top:956.97px;font-size:11.5px;color:#444;font-weight:normal;letter-spacing:0.3px;">Java Programmer</div>
<div class="a " style="left:377px;top:906px;width:7px;height:121px;background:#e2e2e2"></div>
<svg class="a" style="left:379px;top:960px;" width="4" height="14" viewBox="0 0 4 14"><g fill="#fff"><rect x="0" y="0" width="2" height="2"/><rect x="0" y="5" width="2" height="2"/><rect x="0" y="10" width="2" height="2"/></g><g fill="#aaa"><rect x="1" y="1" width="1.5" height="1.5"/><rect x="1" y="6" width="1.5" height="1.5"/><rect x="1" y="11" width="1.5" height="1.5"/></g></svg>
<div class="a " style="left:384px;top:906px;width:1506px;height:72px;background:#f0f0f0"></div>
<div class="a t" style="left:387.00px;top:913.37px;font-size:11.5px;color:#444;font-weight:normal;">Re<u>s</u>ource:</div>
<div class="a t" style="left:387.00px;top:936.47px;font-size:11.5px;color:#444;font-weight:normal;">Ro<u>l</u>e or Task:</div>
<div class="a " style="left:458px;top:908px;width:147px;height:21px;background:#fff;border:1px solid #dadada"></div>
<div class="a t" style="left:463.00px;top:913.37px;font-size:11.5px;color:#444;font-weight:normal;">Scott Hebbard</div>
<svg class="a" style="left:593px;top:917px;" width="8" height="5" viewBox="0 0 8 5"><path d="M0,0 H7 L3.5,3.5 Z" fill="#666"/></svg>
<div class="a " style="left:458px;top:932px;width:147px;height:21px;background:#fff;border:1px solid #7a7a7a"></div>
<div class="a " style="left:463px;top:935px;width:90px;height:15px;background:#0a246a"></div>
<div class="a t" style="left:463.00px;top:936.47px;font-size:11.5px;color:#fff;font-weight:normal;">Java Programmer</div>
<svg class="a" style="left:593px;top:941px;" width="8" height="5" viewBox="0 0 8 5"><path d="M0,0 H7 L3.5,3.5 Z" fill="#666"/></svg>
<div class="a t" style="left:615.50px;top:913.37px;font-size:11.5px;color:#444;font-weight:normal;">Start Date:</div>
<div class="a t" style="left:615.50px;top:934.47px;font-size:11.5px;color:#444;font-weight:normal;">End Date:</div>
<div class="a t" style="left:615.50px;top:955.47px;font-size:11.5px;color:#444;font-weight:normal;">Co<u>m</u>plete %:</div>
<div class="a " style="left:686px;top:908px;width:99px;height:20px;background:#fff"></div>
<div class="a " style="left:686px;top:929px;width:99px;height:20px;background:#fff"></div>
<div class="a" style="left:687px;top:912px;width:53px;height:16px;overflow:hidden"><div class="t" style="position:absolute;left:0;top:2.5px;font-size:11.5px;color:#333;letter-spacing:0.1px">05/09/2016</div></div>
<div class="a" style="left:687px;top:933px;width:53px;height:16px;overflow:hidden"><div class="t" style="position:absolute;left:0;top:2.5px;font-size:11.5px;color:#333;letter-spacing:0.1px">05/09/2016</div></div>
<svg class="a" style="left:773px;top:917px;" width="7" height="4" viewBox="0 0 7 4"><path d="M0,0 H6 L3,3 Z" fill="#666"/></svg>
<svg class="a" style="left:773px;top:938px;" width="7" height="4" viewBox="0 0 7 4"><path d="M0,0 H6 L3,3 Z" fill="#666"/></svg>
<div class="a " style="left:686px;top:950px;width:79px;height:21px;background:#fff;border:1px solid #dadada"></div>
<div class="a t" style="right:1153.00px;top:954.47px;font-size:11.5px;color:#444;font-weight:normal;text-align:right;">45</div>
<div class="a " style="left:765px;top:951px;width:2px;height:19px;background:#000"></div>
<div class="a " style="left:767px;top:950px;width:16px;height:21px;background:#fff"></div>
<svg class="a" style="left:771px;top:953px;" width="7" height="16" viewBox="0 0 7 16"><path d="M0.5,4 L3.5,1 L6.5,4 Z M0.5,11 L3.5,14 L6.5,11 Z" fill="#333"/></svg>
<div class="a t" style="left:795.00px;top:913.37px;font-size:11.5px;color:#444;font-weight:normal;">E<u>x</u>pected Time:</div>
<div class="a t" style="left:795.00px;top:934.47px;font-size:11.5px;color:#444;font-weight:normal;">Alloca<u>t</u>ed Time:</div>
<div class="a t" style="left:795.00px;top:955.47px;font-size:11.5px;color:#444;font-weight:normal;">Time Expen<u>d</u>ed:</div>
<div class="a " style="left:881px;top:908px;width:63px;height:20px;background:#fff;border:1px solid #dadada"></div>
<div class="a " style="left:881px;top:929px;width:63px;height:20px;background:#fff;border:1px solid #dadada"></div>
<div class="a " style="left:881px;top:950px;width:63px;height:20px;background:#fff;border:1px solid #dadada"></div>
<div class="a t" style="right:973.00px;top:911.97px;font-size:11.5px;color:#444;font-weight:normal;text-align:right;">8</div>
<div class="a t" style="right:973.00px;top:932.97px;font-size:11.5px;color:#444;font-weight:normal;text-align:right;">3</div>
<div class="a t" style="right:973.00px;top:953.97px;font-size:11.5px;color:#444;font-weight:normal;text-align:right;">3</div>
<div class="a " style="left:384px;top:978px;width:1506px;height:21px;background:#e4e4e4"></div>
<div class="a " style="left:386px;top:980px;width:70px;height:20px;background:#fff;border:1px solid #b8b8b8;border-bottom:none"></div>
<div class="a t" style="left:392.00px;top:985.47px;font-size:11.5px;color:#444;font-weight:normal;">Description</div>
<div class="a t" style="left:463.00px;top:985.47px;font-size:11.5px;color:#444;font-weight:normal;">History</div>
<div class="a " style="left:386px;top:998px;width:1504px;height:29px;background:#fff;border:1px solid #a8a8a8;border-top-color:#a0a0a0"></div>
<div class="a " style="left:456px;top:998px;width:1434px;height:1px;background:#a0a0a0"></div>
<div class="a " style="left:388px;top:1000px;width:1500px;height:25px;background:#efefef"></div>
<div class="a t" style="left:397px;top:1004px;font:bold 15px 'Liberation Serif',serif;color:#222;line-height:1">B</div>
<div class="a t" style="left:420px;top:1004px;font:italic 15px 'Liberation Serif',serif;color:#222;line-height:1">I</div>
<div class="a t" style="left:439px;top:1004px;font:15px 'Liberation Serif',serif;color:#222;line-height:1;text-decoration:underline">U</div>
<svg class="a" style="left:461px;top:1003px;" width="18" height="17" viewBox="0 0 18 17"><text x="1" y="11" font-size="11" font-family="Liberation Sans" fill="#111">A</text><rect x="8" y="1" width="3" height="3" fill="#e040e0"/><rect x="11" y="1" width="3" height="3" fill="#f0e020"/><rect x="8" y="4" width="3" height="3" fill="#20c0e0"/><rect x="0" y="13" width="15" height="3" fill="#000"/></svg>
<svg class="a" style="left:483px;top:1010px;" width="7" height="4" viewBox="0 0 7 4"><path d="M0,0 H6 L3,3 Z" fill="#777"/></svg>
<div class="a " style="left:496px;top:1003px;width:1px;height:19px;background:#d0d0d0"></div>
<svg class="a" style="left:504px;top:1004px;" width="15" height="15" viewBox="0 0 15 15"><g fill="#222"><rect x="0" y="1" width="2" height="2"/><rect x="0" y="6" width="2" height="2"/><rect x="0" y="11" width="2" height="2"/></g><path d="M4,2 H14 M4,7 H14 M4,12 H14" stroke="#333"/></svg>
<svg class="a" style="left:526px;top:1004px;" width="15" height="15" viewBox="0 0 15 15"><text x="0" y="4" font-size="4" fill="#222" font-family="Liberation Sans">1</text><text x="0" y="9" font-size="4" fill="#222" font-family="Liberation Sans">2</text><text x="0" y="14" font-size="4" fill="#222" font-family="Liberation Sans">3</text><path d="M4,2 H14 M4,7 H14 M4,12 H14" stroke="#333"/></svg>
<div class="a " style="left:548px;top:1003px;width:1px;height:19px;background:#d0d0d0"></div>
<svg class="a" style="left:557px;top:1003px;" width="15" height="16" viewBox="0 0 15 16"><text x="0" y="14.5" font-size="14" fill="#111" font-family="Liberation Sans">x</text><text x="8.5" y="7" font-size="7" fill="#a01010" font-family="Liberation Sans">2</text></svg>
<svg class="a" style="left:580px;top:1002px;" width="15" height="17" viewBox="0 0 15 17"><text x="0" y="10.5" font-size="14" fill="#111" font-family="Liberation Sans">x</text><text x="8.5" y="16" font-size="7" fill="#1020a0" font-family="Liberation Sans">2</text></svg>
<svg class="a" style="left:598px;top:1003px;" width="18" height="17" viewBox="0 0 18 17"><circle cx="7" cy="7" r="6.5" fill="#2a70b8"/><path d="M3,5 Q7,2 10,6 Q7,10 4,9 Z" fill="#6ab04a"/><g fill="none" stroke="#c09010" stroke-width="2"><rect x="5" y="10" width="6" height="5" rx="2.5"/><rect x="10" y="10" width="6" height="5" rx="2.5"/></g></svg>
<div class="a " style="left:626px;top:1003px;width:1px;height:19px;background:#d0d0d0"></div>
<svg class="a" style="left:630px;top:1004px;" width="13" height="15" viewBox="0 0 13 15"><path d="M0.5,0.5 H9 L12.5,4 V14.5 H0.5 Z" fill="#fff" stroke="#3050c0"/><path d="M3,5 H9 M3,8 H9" stroke="#99a"/><path d="M4,13 L9,9" stroke="#d02020" stroke-width="1.5"/></svg>
<div class="a " style="left:0px;top:1027px;width:1915px;height:21px;background:#f0f0f0"></div>
<div class="a " style="left:0px;top:1047px;width:1915px;height:1px;background:#fafafa"></div>
<div class="a t" style="left:0.50px;top:1035.07px;font-size:11.5px;color:#444;font-weight:normal;">Custom Diagram:Manage Users:</div>
<div class="a t" style="left:175.00px;top:1035.07px;font-size:11.5px;color:#444;font-weight:normal;">created: 7/03/2005</div>
<div class="a t" style="left:279.00px;top:1035.07px;font-size:11.5px;color:#444;font-weight:normal;">modified: 5/09/2016 10:13:57 AM</div>
<div class="a t" style="left:457.00px;top:1035.07px;font-size:11.5px;color:#444;font-weight:normal;">131%</div>
<div class="a t" style="left:494.00px;top:1035.07px;font-size:11.5px;color:#444;font-weight:normal;">780 x 1138</div>
<div class="a t" style="left:1742.50px;top:1035.07px;font-size:11.5px;color:#a8a8a8;font-weight:normal;letter-spacing:-0.6px;">CAP</div>
<div class="a t" style="left:1781.50px;top:1035.07px;font-size:11.5px;color:#333;font-weight:normal;letter-spacing:-0.8px;">NUM</div>
<div class="a t" style="left:1825.00px;top:1035.07px;font-size:11.5px;color:#a8a8a8;font-weight:normal;letter-spacing:-0.6px;">SCRL</div>
<div class="a t" style="left:1871.50px;top:1035.07px;font-size:11.5px;color:#a8a8a8;font-weight:normal;letter-spacing:-0.9px;">CLOUD</div>
<div class="a" style="left:29px;top:187px;width:995px;height:638px;overflow:hidden">
<div class="a t" style="left:32.5px;top:-11px;font-size:61.6px;color:#000;line-height:1">Requirements</div>
</div>
<svg class="a" style="left:0;top:0" width="1946" height="1076" viewBox="0 0 1946 1076"><g fill="none" stroke="#1e1e1e" stroke-width="1.4"><path d="M144,455 L144,394 L301,394"/><path d="M143,572 L143,750 L305,750"/><path d="M253,496 L305.4,488"/><path d="M252.5,540 L301.4,552"/><path d="M484.5,386.5 L682.4,386.5 L682.4,450"/><path d="M488.3,477.7 L639.3,474.6"/><path d="M484.4,552.7 L549.6,552.7 L549.6,512.7 L639.3,512.7"/><path d="M389.3,626.2 L389.3,638.8 L669,638.8"/><path d="M740.8,694.3 L742,721.6"/><path d="M486.4,754.3 L671.4,754.3"/></g></svg>
<div class="a" style="left:301px;top:352.5px;width:157px;height:65.10000000000002px;border:1.6px solid #1e1e1e;border-radius:4px;background:linear-gradient(90deg,#f3fbf1 0%,#e6f6e2 50%,#d5efce 100%);box-shadow:3px 3px 2px rgba(0,0,0,0.16);overflow:hidden"><div class="a" style="left:0;top:0;width:12px;height:100%;background:#7ef27a"></div><div class="a" style="left:11.7px;top:0;width:1.1px;height:100%;background:#1e1e1e"></div><div class="a" style="left:12.8px;top:0;width:1.7px;height:100%;background:#fff"></div><div class="a" style="left:14.5px;top:0;width:1.2px;height:100%;background:#1e1e1e"></div></div>
<div class="a t" style="left:323.00px;top:361.30px;font-size:13px;color:#111;font-weight:bold;letter-spacing:-0.1px;">REQ016 -Add</div>
<div class="a t" style="left:323.00px;top:379.30px;font-size:13px;color:#111;font-weight:bold;letter-spacing:-0.1px;">Users</div>
<div class="a" style="left:305.4px;top:441.7px;width:156.40000000000003px;height:65.60000000000002px;border:1.6px solid #1e1e1e;border-radius:4px;background:linear-gradient(90deg,#f3fbf1 0%,#e6f6e2 50%,#d5efce 100%);box-shadow:3px 3px 2px rgba(0,0,0,0.16);overflow:hidden"><div class="a" style="left:0;top:0;width:12px;height:100%;background:#7ef27a"></div><div class="a" style="left:11.7px;top:0;width:1.1px;height:100%;background:#1e1e1e"></div><div class="a" style="left:12.8px;top:0;width:1.7px;height:100%;background:#fff"></div><div class="a" style="left:14.5px;top:0;width:1.2px;height:100%;background:#1e1e1e"></div></div>
<div class="a t" style="left:327.40px;top:451.40px;font-size:13px;color:#111;font-weight:bold;letter-spacing:-0.1px;">REQ017 -Remove</div>
<div class="a t" style="left:327.40px;top:469.40px;font-size:13px;color:#111;font-weight:bold;letter-spacing:-0.1px;">User</div>
<div class="a t" style="left:447.3px;top:482.3px;font:italic 12px 'Liberation Sans',sans-serif;color:#f03030;line-height:1">A</div>
<div class="a" style="left:301.4px;top:535.8px;width:156.20000000000005px;height:64.0px;border:1.6px solid #1e1e1e;border-radius:4px;background:linear-gradient(90deg,#f3fbf1 0%,#e6f6e2 50%,#d5efce 100%);box-shadow:3px 3px 2px rgba(0,0,0,0.16);overflow:hidden"><div class="a" style="left:0;top:0;width:12px;height:100%;background:#f5f2a0"></div><div class="a" style="left:11.7px;top:0;width:1.1px;height:100%;background:#1e1e1e"></div><div class="a" style="left:12.8px;top:0;width:1.7px;height:100%;background:#fff"></div><div class="a" style="left:14.5px;top:0;width:1.2px;height:100%;background:#1e1e1e"></div></div>
<div class="a t" style="left:323.40px;top:544.90px;font-size:13px;color:#111;font-weight:bold;letter-spacing:-0.1px;">REQ018 - Report</div>
<div class="a t" style="left:323.40px;top:562.90px;font-size:13px;color:#111;font-weight:bold;letter-spacing:-0.1px;">on User Account</div>
<div class="a" style="left:639.3px;top:449.8px;width:204.4000000000001px;height:72.49999999999994px;border:1.6px solid #1e1e1e;border-radius:4px;background:linear-gradient(90deg,#f3fbf1 0%,#e6f6e2 50%,#d5efce 100%);box-shadow:3px 3px 2px rgba(0,0,0,0.16);overflow:hidden"><div class="a" style="left:0;top:0;width:12px;height:100%;background:#7ef27a"></div><div class="a" style="left:11.7px;top:0;width:1.1px;height:100%;background:#1e1e1e"></div><div class="a" style="left:12.8px;top:0;width:1.7px;height:100%;background:#fff"></div><div class="a" style="left:14.5px;top:0;width:1.2px;height:100%;background:#1e1e1e"></div></div>
<div class="a t" style="left:661.30px;top:459.30px;font-size:13px;color:#111;font-weight:bold;letter-spacing:-0.1px;">REQ025 - Store User</div>
<div class="a t" style="left:661.30px;top:477.30px;font-size:13px;color:#111;font-weight:bold;letter-spacing:-0.1px;">Details</div>
<div class="a t" style="left:829.2px;top:497.29999999999995px;font:italic 12px 'Liberation Sans',sans-serif;color:#f03030;line-height:1">A</div>
<div class="a" style="left:669px;top:602.6px;width:154.60000000000002px;height:65.19999999999993px;border:1.6px solid #1e1e1e;border-radius:4px;background:linear-gradient(90deg,#f3fbf1 0%,#e6f6e2 50%,#d5efce 100%);box-shadow:3px 3px 2px rgba(0,0,0,0.16);overflow:hidden"><div class="a" style="left:0;top:0;width:12px;height:100%;background:#7ef27a"></div><div class="a" style="left:11.7px;top:0;width:1.1px;height:100%;background:#1e1e1e"></div><div class="a" style="left:12.8px;top:0;width:1.7px;height:100%;background:#fff"></div><div class="a" style="left:14.5px;top:0;width:1.2px;height:100%;background:#1e1e1e"></div></div>
<div class="a t" style="left:691.00px;top:611.20px;font-size:13px;color:#111;font-weight:bold;letter-spacing:-0.1px;">REQ027 - Secure</div>
<div class="a t" style="left:691.00px;top:629.20px;font-size:13px;color:#111;font-weight:bold;letter-spacing:-0.1px;">Access</div>
<div class="a t" style="left:809.1px;top:642.8px;font:italic 12px 'Liberation Sans',sans-serif;color:#f03030;line-height:1">A</div>
<div class="a" style="left:305.3px;top:720.5px;width:154.59999999999997px;height:65.70000000000005px;border:1.6px solid #1e1e1e;border-radius:4px;background:linear-gradient(90deg,#d2f2cc 0%,#b8eab0 50%,#a2e29a 100%);box-shadow:3px 3px 2px rgba(0,0,0,0.16);overflow:hidden"><div class="a" style="left:0;top:0;width:12px;height:100%;background:#f5f2a0"></div><div class="a" style="left:11.7px;top:0;width:1.1px;height:100%;background:#1e1e1e"></div><div class="a" style="left:12.8px;top:0;width:1.7px;height:100%;background:#fff"></div><div class="a" style="left:14.5px;top:0;width:1.2px;height:100%;background:#1e1e1e"></div></div>
<div class="a t" style="left:327.30px;top:730.00px;font-size:13px;color:#111;font-weight:bold;letter-spacing:-0.1px;">REQ024 - Secure</div>
<div class="a t" style="left:327.30px;top:748.00px;font-size:13px;color:#111;font-weight:bold;letter-spacing:-0.1px;">Access</div>
<div class="a" style="left:671.4px;top:721.6px;width:154.39999999999998px;height:65.69999999999993px;border:1.6px solid #1e1e1e;border-radius:4px;background:linear-gradient(90deg,#f3fbf1 0%,#e6f6e2 50%,#d5efce 100%);box-shadow:3px 3px 2px rgba(0,0,0,0.16);overflow:hidden"><div class="a" style="left:0;top:0;width:12px;height:100%;background:#f5f2a0"></div><div class="a" style="left:11.7px;top:0;width:1.1px;height:100%;background:#1e1e1e"></div><div class="a" style="left:12.8px;top:0;width:1.7px;height:100%;background:#fff"></div><div class="a" style="left:14.5px;top:0;width:1.2px;height:100%;background:#1e1e1e"></div></div>
<div class="a t" style="left:693.40px;top:730.80px;font-size:13px;color:#111;font-weight:bold;letter-spacing:-0.1px;">REQ026 - Validate</div>
<div class="a t" style="left:693.40px;top:748.80px;font-size:13px;color:#111;font-weight:bold;letter-spacing:-0.1px;">User</div>
<div class="a " style="left:63px;top:475px;width:170px;height:78px;background:repeating-linear-gradient(-45deg,#3a3a3a 0 1px,#fff 1px 3px)"></div>
<div class="a" style="left:70.7px;top:482.5px;width:154.8px;height:63.0px;border:1.6px solid #1e1e1e;border-radius:4px;background:linear-gradient(90deg,#d2f2cc 0%,#b8eab0 50%,#a2e29a 100%);overflow:hidden"><div class="a" style="left:0;top:0;width:12px;height:100%;background:#7ef27a"></div><div class="a" style="left:11.7px;top:0;width:1.1px;height:100%;background:#1e1e1e"></div><div class="a" style="left:12.8px;top:0;width:1.7px;height:100%;background:#fff"></div><div class="a" style="left:14.5px;top:0;width:1.2px;height:100%;background:#1e1e1e"></div></div>
<div class="a t" style="left:92.70px;top:491.10px;font-size:13px;color:#111;font-weight:bold;letter-spacing:-0.1px;">REQ011 - Manage</div>
<div class="a t" style="left:92.70px;top:509.10px;font-size:13px;color:#111;font-weight:bold;letter-spacing:-0.1px;">User Accounts</div>
<div class="a t" style="left:211.0px;top:520.5px;font:italic 12px 'Liberation Sans',sans-serif;color:#f03030;line-height:1">A</div>
<svg class="a" style="left:0;top:0" width="1946" height="1076" viewBox="0 0 1946 1076"><path d="M144.2,455 L150.7,468 L144.2,481 L137.7,468 Z" fill="#fbf0df" stroke="#1e1e1e" stroke-width="1.2"/><path d="M143.2,547.6 L149.7,559.8 L143.2,572 L136.7,559.8 Z" fill="#fbf0df" stroke="#1e1e1e" stroke-width="1.2"/><path d="M226.9,500 L238.9,491.7 L253,495.8 L241.6,504.7 Z" fill="#fbf0df" stroke="#1e1e1e" stroke-width="1.2"/><path d="M226.5,534 L239.5,531 L252.5,540 L238.9,544 Z" fill="#fbf0df" stroke="#1e1e1e" stroke-width="1.2"/><path d="M458,386.7 L471,380 L484.5,386.7 L471,393.4 Z" fill="#fbf0df" stroke="#1e1e1e" stroke-width="1.2"/><path d="M462,477.7 L475.4,470.5 L488.3,477.7 L475.4,484.4 Z" fill="#fbf0df" stroke="#1e1e1e" stroke-width="1.2"/><path d="M458,552.7 L471.5,545.6 L484.4,552.7 L471.5,560 Z" fill="#fbf0df" stroke="#1e1e1e" stroke-width="1.2"/><path d="M389.3,600.9 L395.8,613.5 L389.3,626.2 L382.8,613.5 Z" fill="#fbf0df" stroke="#1e1e1e" stroke-width="1.2"/><path d="M740.8,668 L747.8,681 L740.8,694.3 L733.8,681 Z" fill="#fbf0df" stroke="#1e1e1e" stroke-width="1.2"/><path d="M460,754.3 L473.4,747.5 L486.4,754.3 L473.4,761 Z" fill="#fbf0df" stroke="#1e1e1e" stroke-width="1.2"/></svg>
<div class="a" style="left:63.2px;top:474.7px;width:7.5px;height:7.5px;background:#fff;border:1px solid #222"></div>
<div class="a" style="left:63.2px;top:510px;width:7.5px;height:7.5px;background:#fff;border:1px solid #222"></div>
<div class="a" style="left:63.2px;top:546px;width:7.5px;height:7.5px;background:#fff;border:1px solid #222"></div>
<div class="a" style="left:144.2px;top:474.7px;width:7.5px;height:7.5px;background:#fff;border:1px solid #222"></div>
<div class="a" style="left:144.2px;top:546px;width:7.5px;height:7.5px;background:#fff;border:1px solid #222"></div>
<div class="a" style="left:225.2px;top:474.7px;width:7.5px;height:7.5px;background:#fff;border:1px solid #222"></div>
<div class="a" style="left:225.2px;top:510px;width:7.5px;height:7.5px;background:#fff;border:1px solid #222"></div>
<div class="a" style="left:225.2px;top:546px;width:7.5px;height:7.5px;background:#fff;border:1px solid #222"></div>
<svg class="a" style="left:240px;top:476px;" width="14" height="48" viewBox="0 0 14 48"><path d="M5,14 V3 M2,6 L5,2.5 L8,6" fill="none" stroke="#111" stroke-width="1.2"/><g fill="none" stroke="#444" stroke-width="1.1"><ellipse cx="6" cy="24" rx="4" ry="3" transform="rotate(-35 6 24)"/><path d="M3,28 L12,19"/></g><g fill="none" stroke="#333" stroke-width="1.3"><circle cx="5.5" cy="39.5" r="4.2"/><path d="M8.5,42.5 L12.5,46.5" stroke-width="2"/></g></svg>
<div class="a " style="left:674px;top:215px;width:334px;height:151px;background:#f0f0f0;border:1px solid #2d6fd2;box-shadow:0 0 6px 2px rgba(40,70,140,0.25)"></div>
<div class="a " style="left:675px;top:216px;width:332px;height:22px;background:#2b579a"></div>
<div class="a t" style="left:682.30px;top:224.17px;font-size:11.5px;color:#ffffff;font-weight:normal;">Dynamic Document Selector</div>
<div class="a t" style="left:686.50px;top:257.97px;font-size:11.5px;color:#444;font-weight:normal;">Style</div>
<div class="a " style="left:744px;top:254px;width:246px;height:21px;background:#fff;border:1px solid #a8a8a8"></div>
<div class="a " style="left:746px;top:256px;width:225px;height:17px;background:#dcdcdc"></div>
<div class="a t" style="left:748.00px;top:259.97px;font-size:11.5px;color:#333;font-weight:normal;">DD-Relationships</div>
<svg class="a" style="left:976px;top:262px;" width="7" height="4" viewBox="0 0 7 4"><path d="M0,0 H6 L3,3 Z" fill="#666"/></svg>
<div class="a " style="left:744px;top:279px;width:48px;height:23px;background:#fdfdfd;border:1px solid #adadad"></div>
<div class="a t" style="left:756.00px;top:285.97px;font-size:11.5px;color:#333;font-weight:normal;">New</div>
<div class="a " style="left:795px;top:279px;width:48px;height:23px;background:#fdfdfd;border:1px solid #adadad"></div>
<div class="a t" style="left:808.50px;top:285.97px;font-size:11.5px;color:#333;font-weight:normal;">Edit</div>
<div class="a " style="left:756px;top:332px;width:75px;height:23px;background:#fdfdfd;border:1px solid #3c7fd0;box-shadow:inset 0 0 0 0.5px #3c7fd0"></div>
<div class="a t" style="left:786.00px;top:338.97px;font-size:11.5px;color:#333;font-weight:normal;"><u>O</u>K</div>
<div class="a " style="left:834px;top:332px;width:75px;height:23px;background:#fdfdfd;border:1px solid #adadad"></div>
<div class="a t" style="left:853.00px;top:338.97px;font-size:11.5px;color:#333;font-weight:normal;"><u>C</u>ancel</div>
<div class="a " style="left:915px;top:332px;width:75px;height:23px;background:#fdfdfd;border:1px solid #adadad"></div>
<div class="a t" style="left:940.00px;top:338.97px;font-size:11.5px;color:#333;font-weight:normal;">Help</div>
<div class="a t" style="left:1197.50px;top:322.38px;font-size:24px;color:#3b6aa8;font-weight:bold;letter-spacing:0.05px;">REQ011 - Manage User Accounts</div>
<div class="a t" style="left:1197.50px;top:353.75px;font-size:14px;color:#111;font-weight:normal;letter-spacing:-0.3px;">Type / stereotype:</div>
<div class="a t" style="left:1341.50px;top:353.75px;font-size:14px;color:#111;font-weight:normal;letter-spacing:-0.1px;">Requirement</div>
<div class="a t" style="left:1434.50px;top:353.75px;font-size:14px;color:#111;font-weight:normal;letter-spacing:-0.5px;">«Functional»</div>
<div class="a t" style="left:1197.50px;top:385.15px;font-size:14px;color:#111;font-weight:normal;letter-spacing:-0.17px;">The system is required to store and maintain a list of client accounts in a persistent repository.</div>
<div class="a" style="left:1197px;top:431px;width:649px;height:372px;border:1px solid #a0a0a0;border-bottom:none;background:#fff;overflow:hidden">
<div class="a" style="left:0;top:0;width:100%;height:23px;background:#f4f4f4;border-bottom:2px solid #b4b4b4"></div>
</div>
<div class="a t" style="left:1204.50px;top:438.77px;font-size:11.5px;color:#444;font-weight:bold;letter-spacing:0.1px;">INCOMING STRUCTURAL RELATIONSHIPS</div>
<div class="a " style="left:1198px;top:517px;width:647px;height:2px;background:#a8a8a8"></div>
<div class="a " style="left:1198px;top:582px;width:647px;height:2px;background:#a8a8a8"></div>
<div class="a " style="left:1198px;top:647px;width:647px;height:2px;background:#a8a8a8"></div>
<div class="a " style="left:1198px;top:711px;width:647px;height:2px;background:#a8a8a8"></div>
<div class="a " style="left:1198px;top:775px;width:647px;height:2px;background:#a8a8a8"></div>
<div class="a" style="left:1198px;top:455px;width:647px;height:348px;overflow:hidden">
<svg class="a" style="left:18px;top:17.899999999999977px" width="13" height="11" viewBox="0 0 13 11"><path d="M0,4.7 H6" stroke="#8a8ad8" stroke-width="3.4"/><path d="M6.3,1 L10.5,4.6 L6.3,9.5 Z" fill="none" stroke="#3a52c4" stroke-width="1.3"/><path d="M10.5,4.6 L11.5,7" stroke="#3a52c4" stroke-width="1"/></svg>
<div class="a t" style="left:36.5px;top:17.20px;font-size:13px;color:#111;letter-spacing:-0.535px">Realization&nbsp; from «Activity» Repeat for Each Supplier to «Functional» REQ011 - Manage User Accounts</div>
<div class="a t" style="right:19px;top:31.10px;font-size:13px;color:#777;letter-spacing:-0.4px">[ Direction is 'Source -&gt; Destination'. ]</div>
<svg class="a" style="left:18px;top:82.70000000000005px" width="13" height="11" viewBox="0 0 13 11"><path d="M0,4.7 H6" stroke="#8a8ad8" stroke-width="3.4"/><path d="M6.3,1 L10.5,4.6 L6.3,9.5 Z" fill="none" stroke="#3a52c4" stroke-width="1.3"/><path d="M10.5,4.6 L11.5,7" stroke="#3a52c4" stroke-width="1"/></svg>
<div class="a t" style="left:36.5px;top:82.00px;font-size:13px;color:#111;letter-spacing:-0.614px">Aggregation&nbsp; from «Functional» REQ024 - Secure Access to «Functional» REQ011 - Manage User Accounts</div>
<div class="a t" style="right:19px;top:95.90px;font-size:13px;color:#777;letter-spacing:-0.4px">[ Direction is 'Source -&gt; Destination'. ]</div>
<svg class="a" style="left:18px;top:146.89999999999998px" width="13" height="11" viewBox="0 0 13 11"><path d="M0,4.7 H6" stroke="#8a8ad8" stroke-width="3.4"/><path d="M6.3,1 L10.5,4.6 L6.3,9.5 Z" fill="none" stroke="#3a52c4" stroke-width="1.3"/><path d="M10.5,4.6 L11.5,7" stroke="#3a52c4" stroke-width="1"/></svg>
<div class="a t" style="left:36.5px;top:146.20px;font-size:13px;color:#111;letter-spacing:-0.584px">Aggregation&nbsp; from «Functional» REQ016 -Add Users to «Functional» REQ011 - Manage User Accounts</div>
<div class="a t" style="right:19px;top:160.10px;font-size:13px;color:#777;letter-spacing:-0.4px">[ Direction is 'Source -&gt; Destination'. ]</div>
<svg class="a" style="left:18px;top:212.5px" width="13" height="11" viewBox="0 0 13 11"><path d="M0,4.7 H6" stroke="#8a8ad8" stroke-width="3.4"/><path d="M6.3,1 L10.5,4.6 L6.3,9.5 Z" fill="none" stroke="#3a52c4" stroke-width="1.3"/><path d="M10.5,4.6 L11.5,7" stroke="#3a52c4" stroke-width="1"/></svg>
<div class="a t" style="left:36.5px;top:211.80px;font-size:13px;color:#111;letter-spacing:-0.507px">Realization&nbsp; from&nbsp; View History to «Functional» REQ011 - Manage User Accounts</div>
<div class="a t" style="right:19px;top:225.70px;font-size:13px;color:#777;letter-spacing:-0.4px">[ Direction is 'Source -&gt; Destination'. ]</div>
<svg class="a" style="left:18px;top:275.29999999999995px" width="13" height="11" viewBox="0 0 13 11"><path d="M0,4.7 H6" stroke="#8a8ad8" stroke-width="3.4"/><path d="M6.3,1 L10.5,4.6 L6.3,9.5 Z" fill="none" stroke="#3a52c4" stroke-width="1.3"/><path d="M10.5,4.6 L11.5,7" stroke="#3a52c4" stroke-width="1"/></svg>
<div class="a t" style="left:36.5px;top:274.60px;font-size:13px;color:#111;letter-spacing:-0.6px">Aggregation&nbsp; from «Functional» REQ017 -Remove User to «Functional» REQ011 - Manage User Accounts</div>
<div class="a t" style="right:19px;top:288.50px;font-size:13px;color:#777;letter-spacing:-0.4px">[ Direction is 'Source -&gt; Destination'. ]</div>
<svg class="a" style="left:18px;top:339.5px" width="13" height="11" viewBox="0 0 13 11"><path d="M0,4.7 H6" stroke="#8a8ad8" stroke-width="3.4"/><path d="M6.3,1 L10.5,4.6 L6.3,9.5 Z" fill="none" stroke="#3a52c4" stroke-width="1.3"/><path d="M10.5,4.6 L11.5,7" stroke="#3a52c4" stroke-width="1"/></svg>
<div class="a t" style="left:36.5px;top:338.80px;font-size:13px;color:#111;letter-spacing:-0.57px">Aggregation&nbsp; from «Functional» REQ018 - Report on User Account to «Functional» REQ011 - Manage User</div>
</div></div></body></html>
